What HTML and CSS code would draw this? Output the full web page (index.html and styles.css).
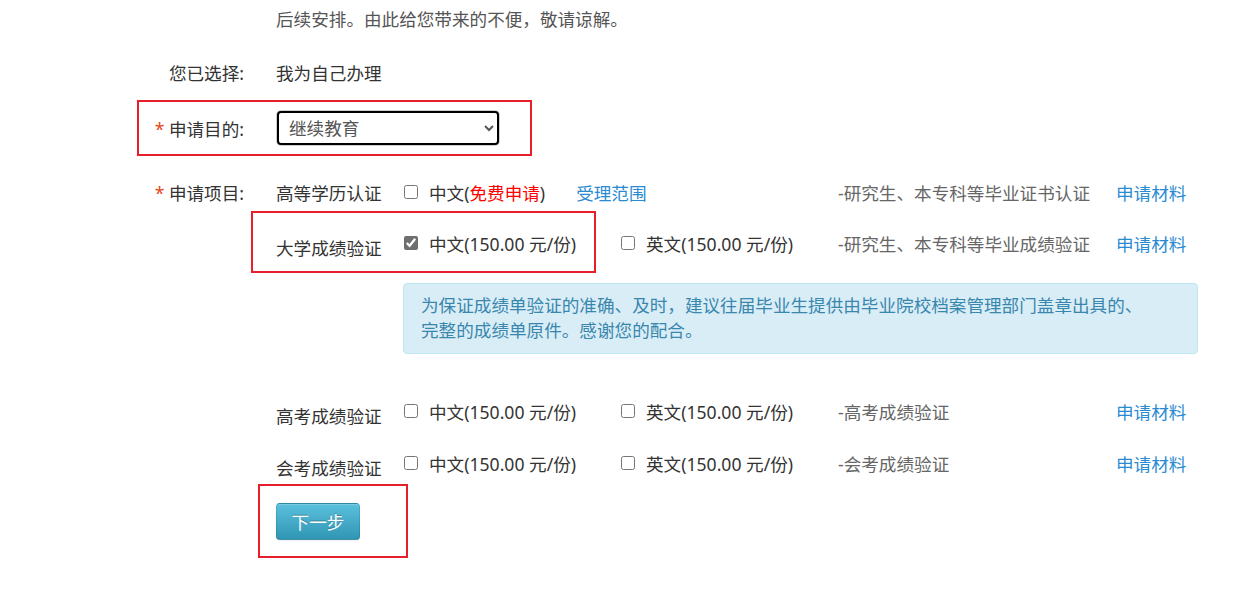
FILE: index.html
```html
<!DOCTYPE html>
<html lang="zh-CN">
<head>
<meta charset="utf-8">
<title>申请</title>
<link rel="stylesheet" href="styles.css">
</head>
<body>
<div class="page">
  <div class="intro">后续安排。由此给您带来的不便，敬请谅解。</div>

  <div class="row row-chosen">
    <div class="label">您已选择:</div>
    <div class="value">我为自己办理</div>
  </div>

  <div class="row row-purpose">
    <div class="label"><span class="star">*</span> 申请目的:</div>
    <div class="value">
      <select class="sel">
        <option>继续教育</option>
      </select>
    </div>
  </div>

  <div class="row row-item1">
    <div class="label"><span class="star">*</span> 申请项目:</div>
    <div class="items">
      <div class="name">高等学历认证</div>
      <div class="opt opt-wide"><input type="checkbox" class="cb"><span>中文(<span class="free">免费申请</span>)</span><a class="link scope">受理范围</a></div>
      <div class="desc">-研究生、本专科等毕业证书认证</div>
      <a class="link">申请材料</a>
    </div>
  </div>

  <div class="row row-item2">
    <div class="label"></div>
    <div class="items">
      <div class="name name-low">大学成绩验证</div>
      <div class="opt"><input type="checkbox" class="cb" checked><span>中文(150.00 元/份)</span></div>
      <div class="opt"><input type="checkbox" class="cb"><span>英文(150.00 元/份)</span></div>
      <div class="desc">-研究生、本专科等毕业成绩验证</div>
      <a class="link">申请材料</a>
    </div>
  </div>

  <div class="alert">为保证成绩单验证的准确、及时，建议往届毕业生提供由毕业院校档案管理部门盖章出具的、<br>完整的成绩单原件。感谢您的配合。</div>

  <div class="row row-item3">
    <div class="label"></div>
    <div class="items">
      <div class="name name-low">高考成绩验证</div>
      <div class="opt"><input type="checkbox" class="cb"><span>中文(150.00 元/份)</span></div>
      <div class="opt"><input type="checkbox" class="cb"><span>英文(150.00 元/份)</span></div>
      <div class="desc">-高考成绩验证</div>
      <a class="link">申请材料</a>
    </div>
  </div>

  <div class="row row-item4">
    <div class="label"></div>
    <div class="items">
      <div class="name name-low">会考成绩验证</div>
      <div class="opt"><input type="checkbox" class="cb"><span>中文(150.00 元/份)</span></div>
      <div class="opt"><input type="checkbox" class="cb"><span>英文(150.00 元/份)</span></div>
      <div class="desc">-会考成绩验证</div>
      <a class="link">申请材料</a>
    </div>
  </div>

  <div class="actions">
    <button class="btn">下一步</button>
  </div>

  <div class="mark mark-purpose"></div>
  <div class="mark mark-item"></div>
  <div class="mark mark-btn"></div>
</div>
</body>
</html>
```

FILE: styles.css
```css
html, body {
  margin: 0;
  padding: 0;
  background: #fff;
}
body {
  font-family: "Noto Sans", "Noto Sans CJK SC", sans-serif;
  font-size: 17.6px;
  color: #333;
}
.page {
  position: relative;
  width: 1245px;
  height: 593px;
  overflow: hidden;
}
.intro {
  height: 38px;
  line-height: 38px;
  padding-left: 276px;
  color: #555;
}
.row {
  display: flex;
  align-items: center;
  height: 38px;
}
.label {
  width: 244px;
  flex: none;
  text-align: right;
  margin-right: 32px;
  white-space: nowrap;
}
.star {
  color: #e2491e;
}
.value {
  white-space: nowrap;
}
.row-chosen { margin-top: 15px; }
.row-purpose { margin-top: 18px; }
.row-item1 { margin-top: 26px; }
.row-item2 { margin-top: 13px; }
.row-item3 { margin-top: 38px; }
.row-item4 { margin-top: 14px; }

.sel {
  width: 222px;
  height: 34px;
  margin-left: 1px;
  padding: 0 6px 0 6px;
  font-family: inherit;
  font-size: 17.6px;
  color: #555;
  background: #fff;
  border: 2px solid #000;
  border-radius: 4px;
  box-shadow: 0 0 0 1px #d0d0d0;
  outline: none;
}

.items {
  display: flex;
  align-items: center;
  white-space: nowrap;
}
.name {
  width: 128px;
  flex: none;
}
.name-low {
  position: relative;
  top: 4px;
}
.opt {
  width: 217px;
  flex: none;
  display: flex;
  align-items: center;
}
.opt-wide {
  width: 434px;
}
.cb {
  width: 14px;
  height: 14px;
  margin: 0 11px 0 0;
  accent-color: #6f6f6f;
}
.free {
  color: #f00;
}
.scope {
  margin-left: 31px;
}
.desc {
  width: 278px;
  flex: none;
  color: #666;
}
.link {
  color: #2a8bd2;
  text-decoration: none;
}

.alert {
  margin: 21px 0 0 403px;
  width: 776px;
  height: 51px;
  padding: 9px 0 9px 17px;
  line-height: 25px;
  background: #d9edf7;
  border: 1px solid #bce8f1;
  border-radius: 4px;
  color: #3a87ad;
  font-size: 17.6px;
}

.actions {
  margin: 21px 0 0 276px;
}
.btn {
  width: 84px;
  height: 37px;
  padding: 0;
  font-family: inherit;
  font-size: 17.6px;
  color: #fff;
  text-shadow: 0 -1px 0 rgba(0, 0, 0, 0.25);
  background: linear-gradient(to bottom, #5bc0de, #2f96b4);
  border: 1px solid #3089a3;
  border-color: rgba(0, 0, 0, 0.1) rgba(0, 0, 0, 0.1) rgba(0, 0, 0, 0.25);
  border-radius: 4px;
  box-shadow: inset 0 1px 0 rgba(255, 255, 255, 0.2), 0 1px 2px rgba(0, 0, 0, 0.05);
}

.mark {
  position: absolute;
  border: 2px solid #e61f2a;
  box-sizing: border-box;
  pointer-events: none;
}
.mark-purpose {
  left: 137px;
  top: 100px;
  width: 395px;
  height: 56px;
}
.mark-item {
  left: 251px;
  top: 211px;
  width: 345px;
  height: 62px;
}
.mark-btn {
  left: 258px;
  top: 484px;
  width: 150px;
  height: 74px;
}
```
